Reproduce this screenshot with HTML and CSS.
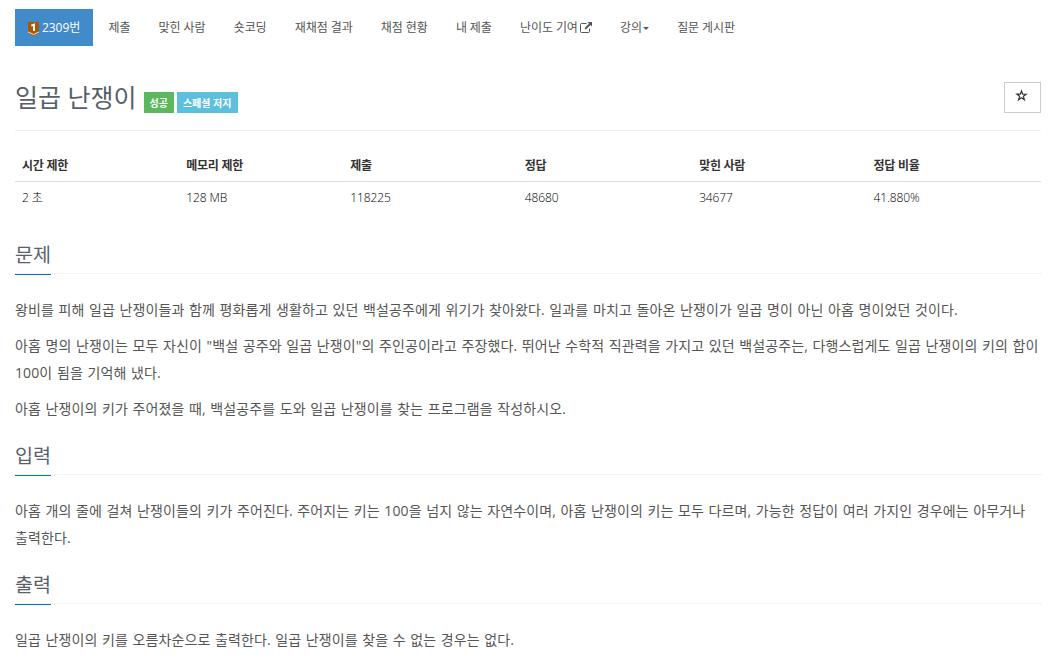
FILE: index.html
```html
<!DOCTYPE html>
<html lang="ko">
<head>
    <meta charset="UTF-8">
    <meta name="viewport" content="width=device-width, initial-scale=1.0">
    <title>2309번: 일곱 난쟁이</title>
    <link rel="stylesheet" href="styles.css">
</head>
<body>
    <div class="container">
        <!-- Problem menu -->
        <ul class="problem-menu">
            <li class="active"><a href="#"><svg class="tier" viewBox="0 0 11 14" width="11" height="14"><path fill="#ad5600" d="M0 0h11v11L5.5 13.8 0 11z"/><path fill="none" stroke="#f3e3d3" stroke-width="1" d="M0 10l5.5 2.5L11 10"/><path fill="none" stroke="#fff" stroke-width="2" d="M3.3 3.6L6 2.6V9"/></svg> 2309번</a></li>
            <li><a href="#">제출</a></li>
            <li><a href="#">맞힌 사람</a></li>
            <li><a href="#">숏코딩</a></li>
            <li><a href="#">재채점 결과</a></li>
            <li><a href="#">채점 현황</a></li>
            <li><a href="#">내 제출</a></li>
            <li><a href="#">난이도 기여 <svg class="external" viewBox="0 0 12 11" width="12" height="11"><path fill="none" stroke="#555" stroke-width="1" d="M6.5 1.5H1.5Q.5 1.5.5 2.5v7q0 1 1 1h7q1 0 1-1V6.5"/><path fill="#555" d="M7.5 0H12v4.5l-1.5-1.5-4.6 4.6-1.4-1.4L9.1 1.6z"/></svg></a></li>
            <li><a href="#">강의<b class="caret"></b></a></li>
            <li><a href="#">질문 게시판</a></li>
        </ul>

        <div class="page-header">
            <h1>일곱 난쟁이</h1>
            <span class="label label-success">성공</span>
            <span class="label label-info">스페셜 저지</span>
            <button class="bookmark" aria-label="즐겨찾기"><svg viewBox="0 0 13 13" width="13" height="13"><path fill="none" stroke="#333" stroke-width="1.2" d="M6.5 2l1.2 3.1 3.5.1-2.8 2.1 1 3.5-2.9-2-2.9 2 1-3.5-2.8-2.1 3.5-.1z"/></svg></button>
        </div>

        <table class="problem-info">
            <thead>
                <tr>
                    <th>시간 제한</th>
                    <th>메모리 제한</th>
                    <th>제출</th>
                    <th>정답</th>
                    <th>맞힌 사람</th>
                    <th>정답 비율</th>
                </tr>
            </thead>
            <tbody>
                <tr>
                    <td>2 초</td>
                    <td>128 MB</td>
                    <td>118225</td>
                    <td>48680</td>
                    <td>34677</td>
                    <td>41.880%</td>
                </tr>
            </tbody>
        </table>

        <section class="description">
            <div class="headline"><h2>문제</h2></div>
            <p>왕비를 피해 일곱 난쟁이들과 함께 평화롭게 생활하고 있던 백설공주에게 위기가 찾아왔다. 일과를 마치고 돌아온 난쟁이가 일곱 명이 아닌 아홉 명이었던 것이다.</p>
            <p>아홉 명의 난쟁이는 모두 자신이 "백설 공주와 일곱 난쟁이"의 주인공이라고 주장했다. 뛰어난 수학적 직관력을 가지고 있던 백설공주는, 다행스럽게도 일곱 난쟁이의 키의 합이 100이 됨을 기억해 냈다.</p>
            <p>아홉 난쟁이의 키가 주어졌을 때, 백설공주를 도와 일곱 난쟁이를 찾는 프로그램을 작성하시오.</p>
        </section>

        <section class="description">
            <div class="headline"><h2>입력</h2></div>
            <p>아홉 개의 줄에 걸쳐 난쟁이들의 키가 주어진다. 주어지는 키는 100을 넘지 않는 자연수이며, 아홉 난쟁이의 키는 모두 다르며, 가능한 정답이 여러 가지인 경우에는 아무거나 출력한다.</p>
        </section>

        <section class="description">
            <div class="headline"><h2>출력</h2></div>
            <p>일곱 난쟁이의 키를 오름차순으로 출력한다. 일곱 난쟁이를 찾을 수 없는 경우는 없다.</p>
        </section>
    </div>
</body>
</html>
```
FILE: styles.css
```css
* {
    box-sizing: border-box;
}

body {
    margin: 0;
    background-color: #fff;
    color: #333;
    font-family: "Open Sans", "Noto Sans CJK KR", sans-serif;
    font-size: 12px;
    overflow: hidden;
}

.container {
    padding: 9px 13px 0 15px;
}

.problem-menu {
    display: flex;
    gap: 2px;
    margin: 0;
    padding: 0;
    list-style: none;
    letter-spacing: -0.08px;
}

.problem-menu a {
    display: block;
    height: 37px;
    padding: 0 12.7px 0 13.5px;
    line-height: 37px;
    color: #555;
    text-decoration: none;
    white-space: nowrap;
}

.problem-menu .active a {
    width: 78px;
    padding: 0 0 0 13px;
    background-color: #428bca;
    color: #fff;
}

.tier {
    vertical-align: -4px;
}

.external {
    margin-left: -1px;
    vertical-align: -1px;
}

.caret {
    display: inline-block;
    margin-left: 1px;
    vertical-align: middle;
    border-top: 3px solid #555;
    border-right: 3px solid transparent;
    border-left: 3px solid transparent;
}

.page-header {
    display: flex;
    align-items: flex-start;
    height: 85px;
    padding-top: 36px;
    border-bottom: 1px solid #eee;
}

.page-header h1 {
    margin: 0 7px 0 0;
    color: #585f69;
    font-size: 25px;
    font-weight: 400;
    line-height: 30px;
}

.label {
    height: 21px;
    margin: 10px 3px 0 0;
    padding: 0 6px;
    color: #fff;
    font-size: 10px;
    font-weight: 700;
    line-height: 22px;
}

.label-success {
    background-color: #5cb85c;
}

.label-info {
    background-color: #5bc0de;
}

.bookmark {
    width: 37px;
    height: 31px;
    margin-left: auto;
    padding: 0 2px 5px 0;
    border: 1px solid #ccc;
    background-color: #fff;
    line-height: 1;
}

.bookmark svg {
    vertical-align: middle;
}

.problem-info {
    width: 100%;
    margin-top: 19px;
    border-collapse: collapse;
    table-layout: fixed;
}

.problem-info th,
.problem-info td {
    width: 17%;
    height: 33px;
    padding: 0 7px;
    text-align: left;
    line-height: 20px;
}

.problem-info th:nth-child(-n+2) {
    width: 16%;
}

.problem-info th {
    height: 31px;
    padding-top: 2px;
    border-bottom: 1px solid #ddd;
    font-weight: 700;
    letter-spacing: -0.25px;
}

.problem-info td {
    color: #000;
    font-weight: 300;
    letter-spacing: -0.1px;
}

.headline {
    display: flex;
    height: 34px;
    border-bottom: 1px dotted #e4e9f0;
}

.headline h2 {
    height: 35px;
    margin: 0;
    border-bottom: 1px solid #0078c0;
    color: #585f69;
    font-size: 19.6px;
    font-weight: 400;
    line-height: 30px;
}

.description {
    margin-top: 19px;
}

.problem-info + .description {
    margin-top: 26px;
}

.description p {
    margin: 0 0 9px;
    color: #555;
    font-size: 14px;
    line-height: 27px;
    letter-spacing: 0.12px;
    word-spacing: 0.75px;
    word-break: keep-all;
}

.description .headline + p {
    margin-top: 22px;
}
```
